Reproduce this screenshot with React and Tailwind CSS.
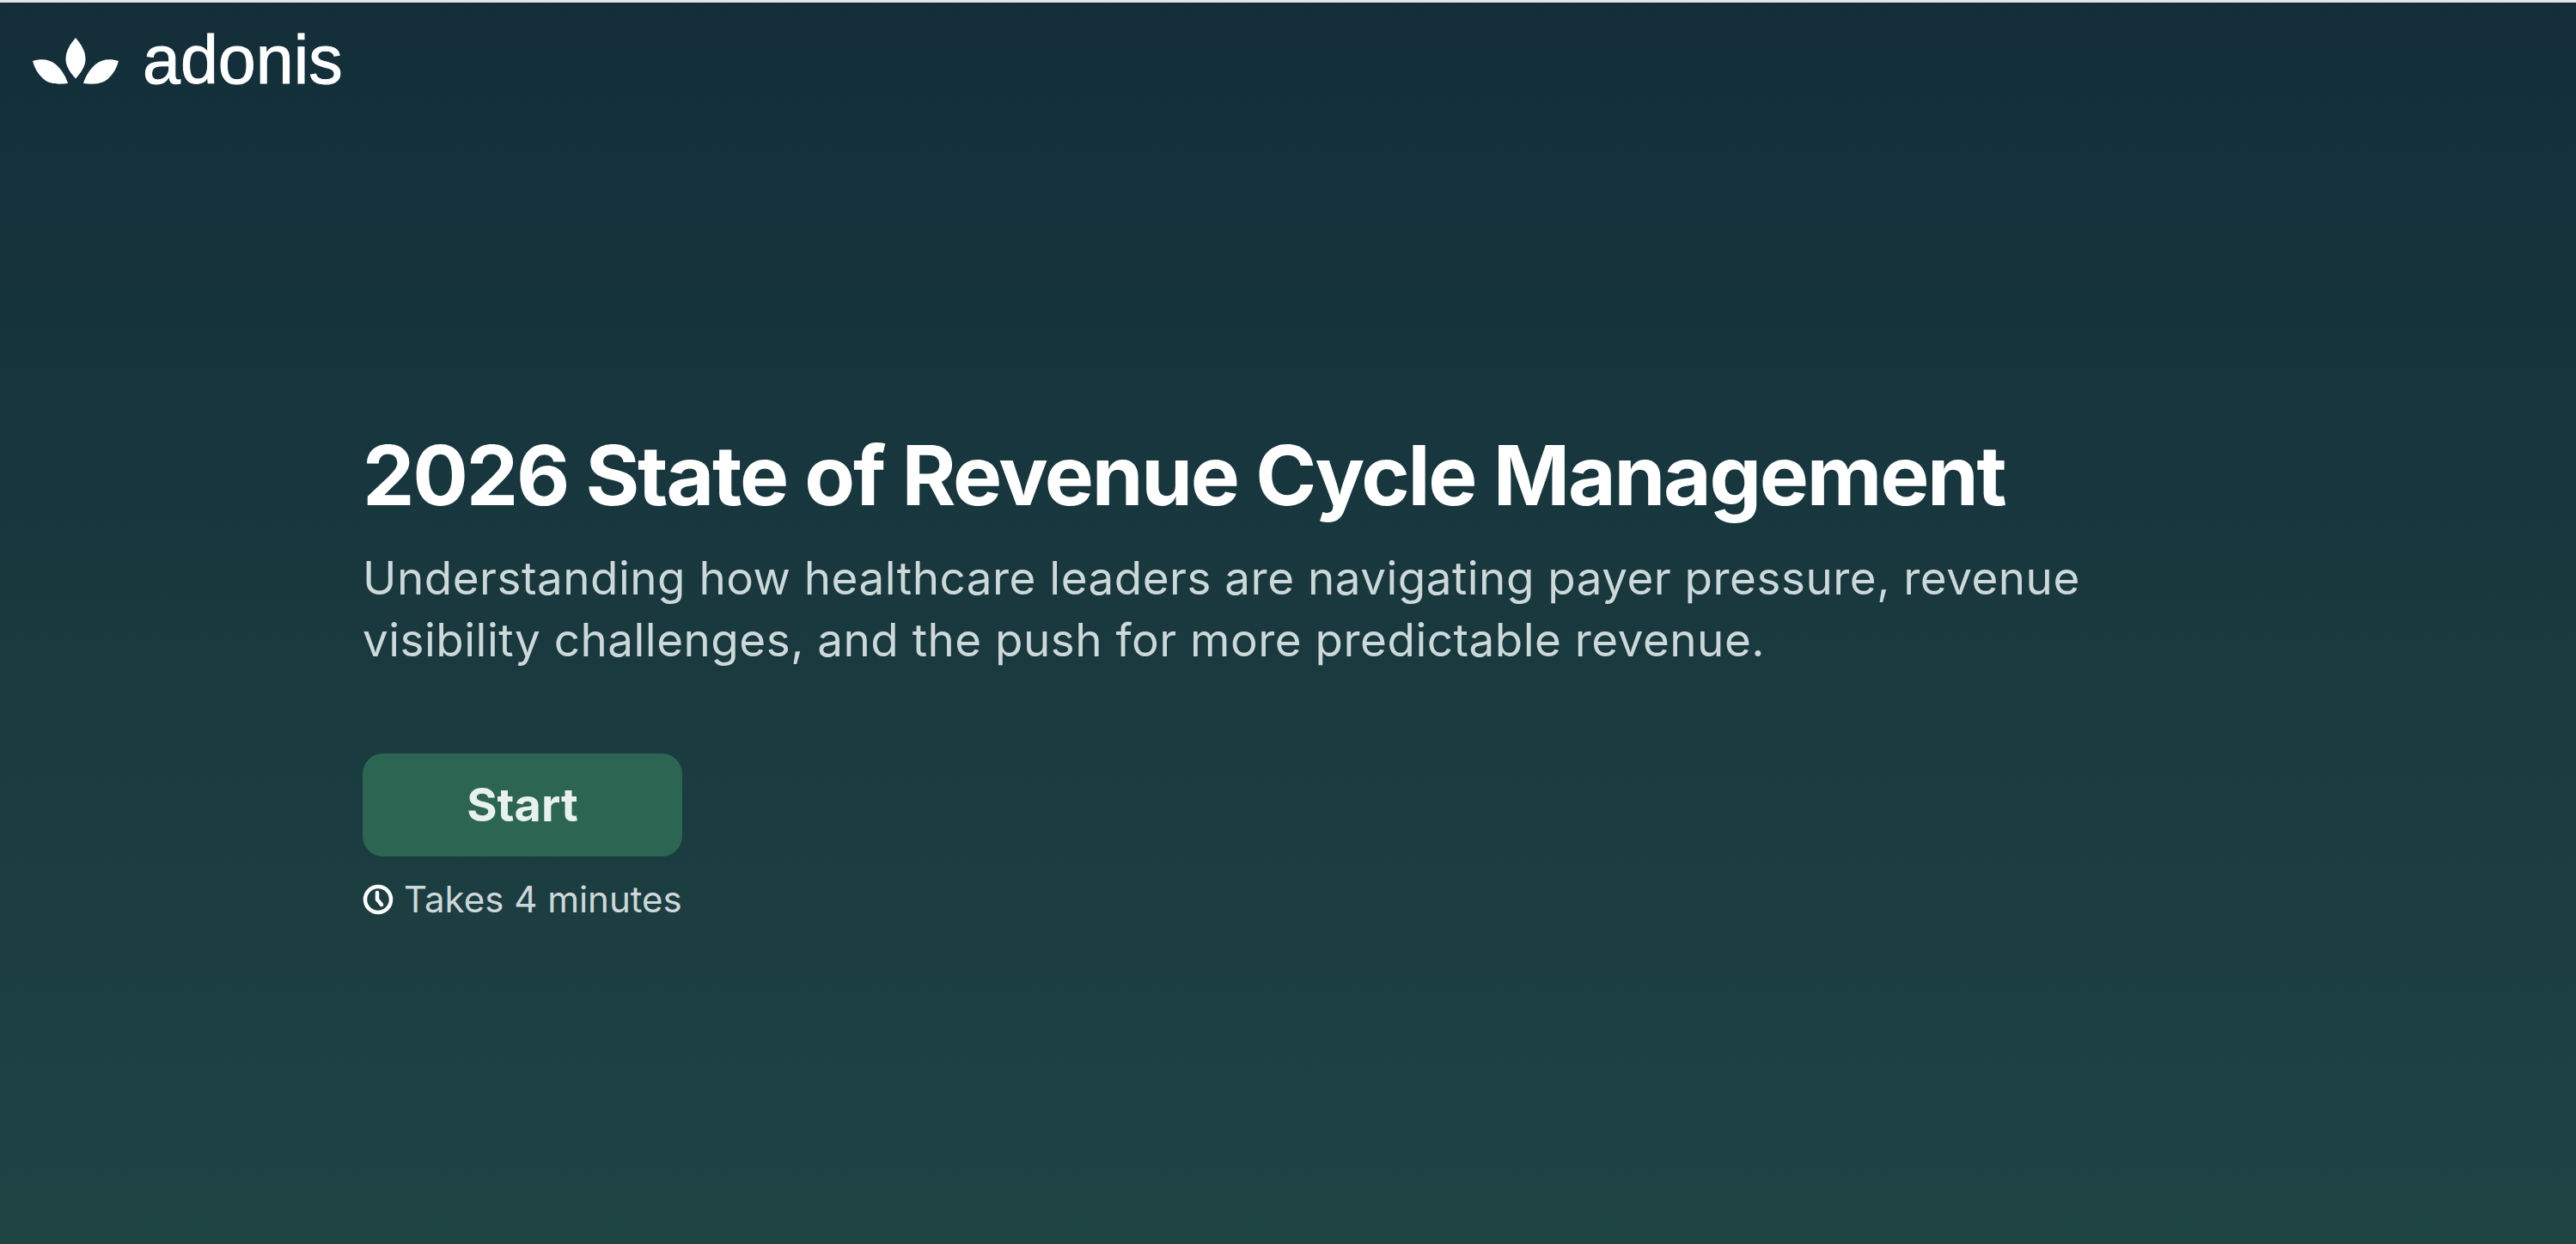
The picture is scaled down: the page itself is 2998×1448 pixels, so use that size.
import React from 'react';

const LogoMark = () => (
  <svg className="mt-[3px]" width="100" height="54" viewBox="0 0 100 54" fill="white" aria-hidden="true">
    <path d="M50 0C44 7 38.500 15 38.500 25C38.500 33 44 41 50 47.500C56 41 61.500 33 61.500 25C61.500 15 56 7 50 0Z" />
    <path d="M0 27C10 24 20 25 27 31C34 37 39 46 41 53C30 54.500 19 54 12 47.500C6 42 2 35 0 27Z" />
    <path d="M100 27C90 24 80 25 73 31C66 37 61 46 59 53C70 54.500 81 54 88 47.500C94 42 98 35 100 27Z" />
  </svg>
);

const ClockIcon = () => (
  <svg width="36" height="36" viewBox="0 0 36 36" fill="none" stroke="white" strokeWidth="4.5" strokeLinecap="round" aria-hidden="true">
    <circle cx="18" cy="18" r="15" />
    <path d="M17 10V18L22 24" />
  </svg>
);

export default function App() {
  return (
    <div className="min-h-[1448px] border-t-[3px] border-[#e4e6e6] bg-gradient-to-b from-[#132e39] to-[#1f4444] font-['Inter',sans-serif]">
      <header className="flex items-center h-[136px] pl-[38px] pt-[2px] pb-[6px]">
        <LogoMark />
        <span className="ml-[28px] font-['Liberation_Sans',sans-serif] text-[79px] leading-none text-white [-webkit-text-stroke:1px_white]">adonis</span>
      </header>

      <main className="pl-[422px] pt-[356px]">
        <h1 className="text-[96px] leading-[116px] font-bold tracking-[-2.25px] text-white">
          2026 State of Revenue Cycle Management
        </h1>
        <p className="mt-[26px] w-[2050px] text-[53px] leading-[72px] tracking-[0.48px] text-[#cdd8d9]">
          Understanding how healthcare leaders are navigating payer pressure, revenue visibility challenges, and the push for more predictable revenue.
        </p>
        <button className="mt-[96px] block w-[372px] h-[120px] pb-[2px] rounded-[24px] bg-[#2c6552] text-[54px] font-bold text-[#e8f1ee]">
          Start
        </button>
        <div className="mt-[25px] flex items-center gap-[12px] text-[42px] leading-[50px] text-[#cdd8d9]">
          <ClockIcon />
          <span>Takes 4 minutes</span>
        </div>
      </main>
    </div>
  );
}
